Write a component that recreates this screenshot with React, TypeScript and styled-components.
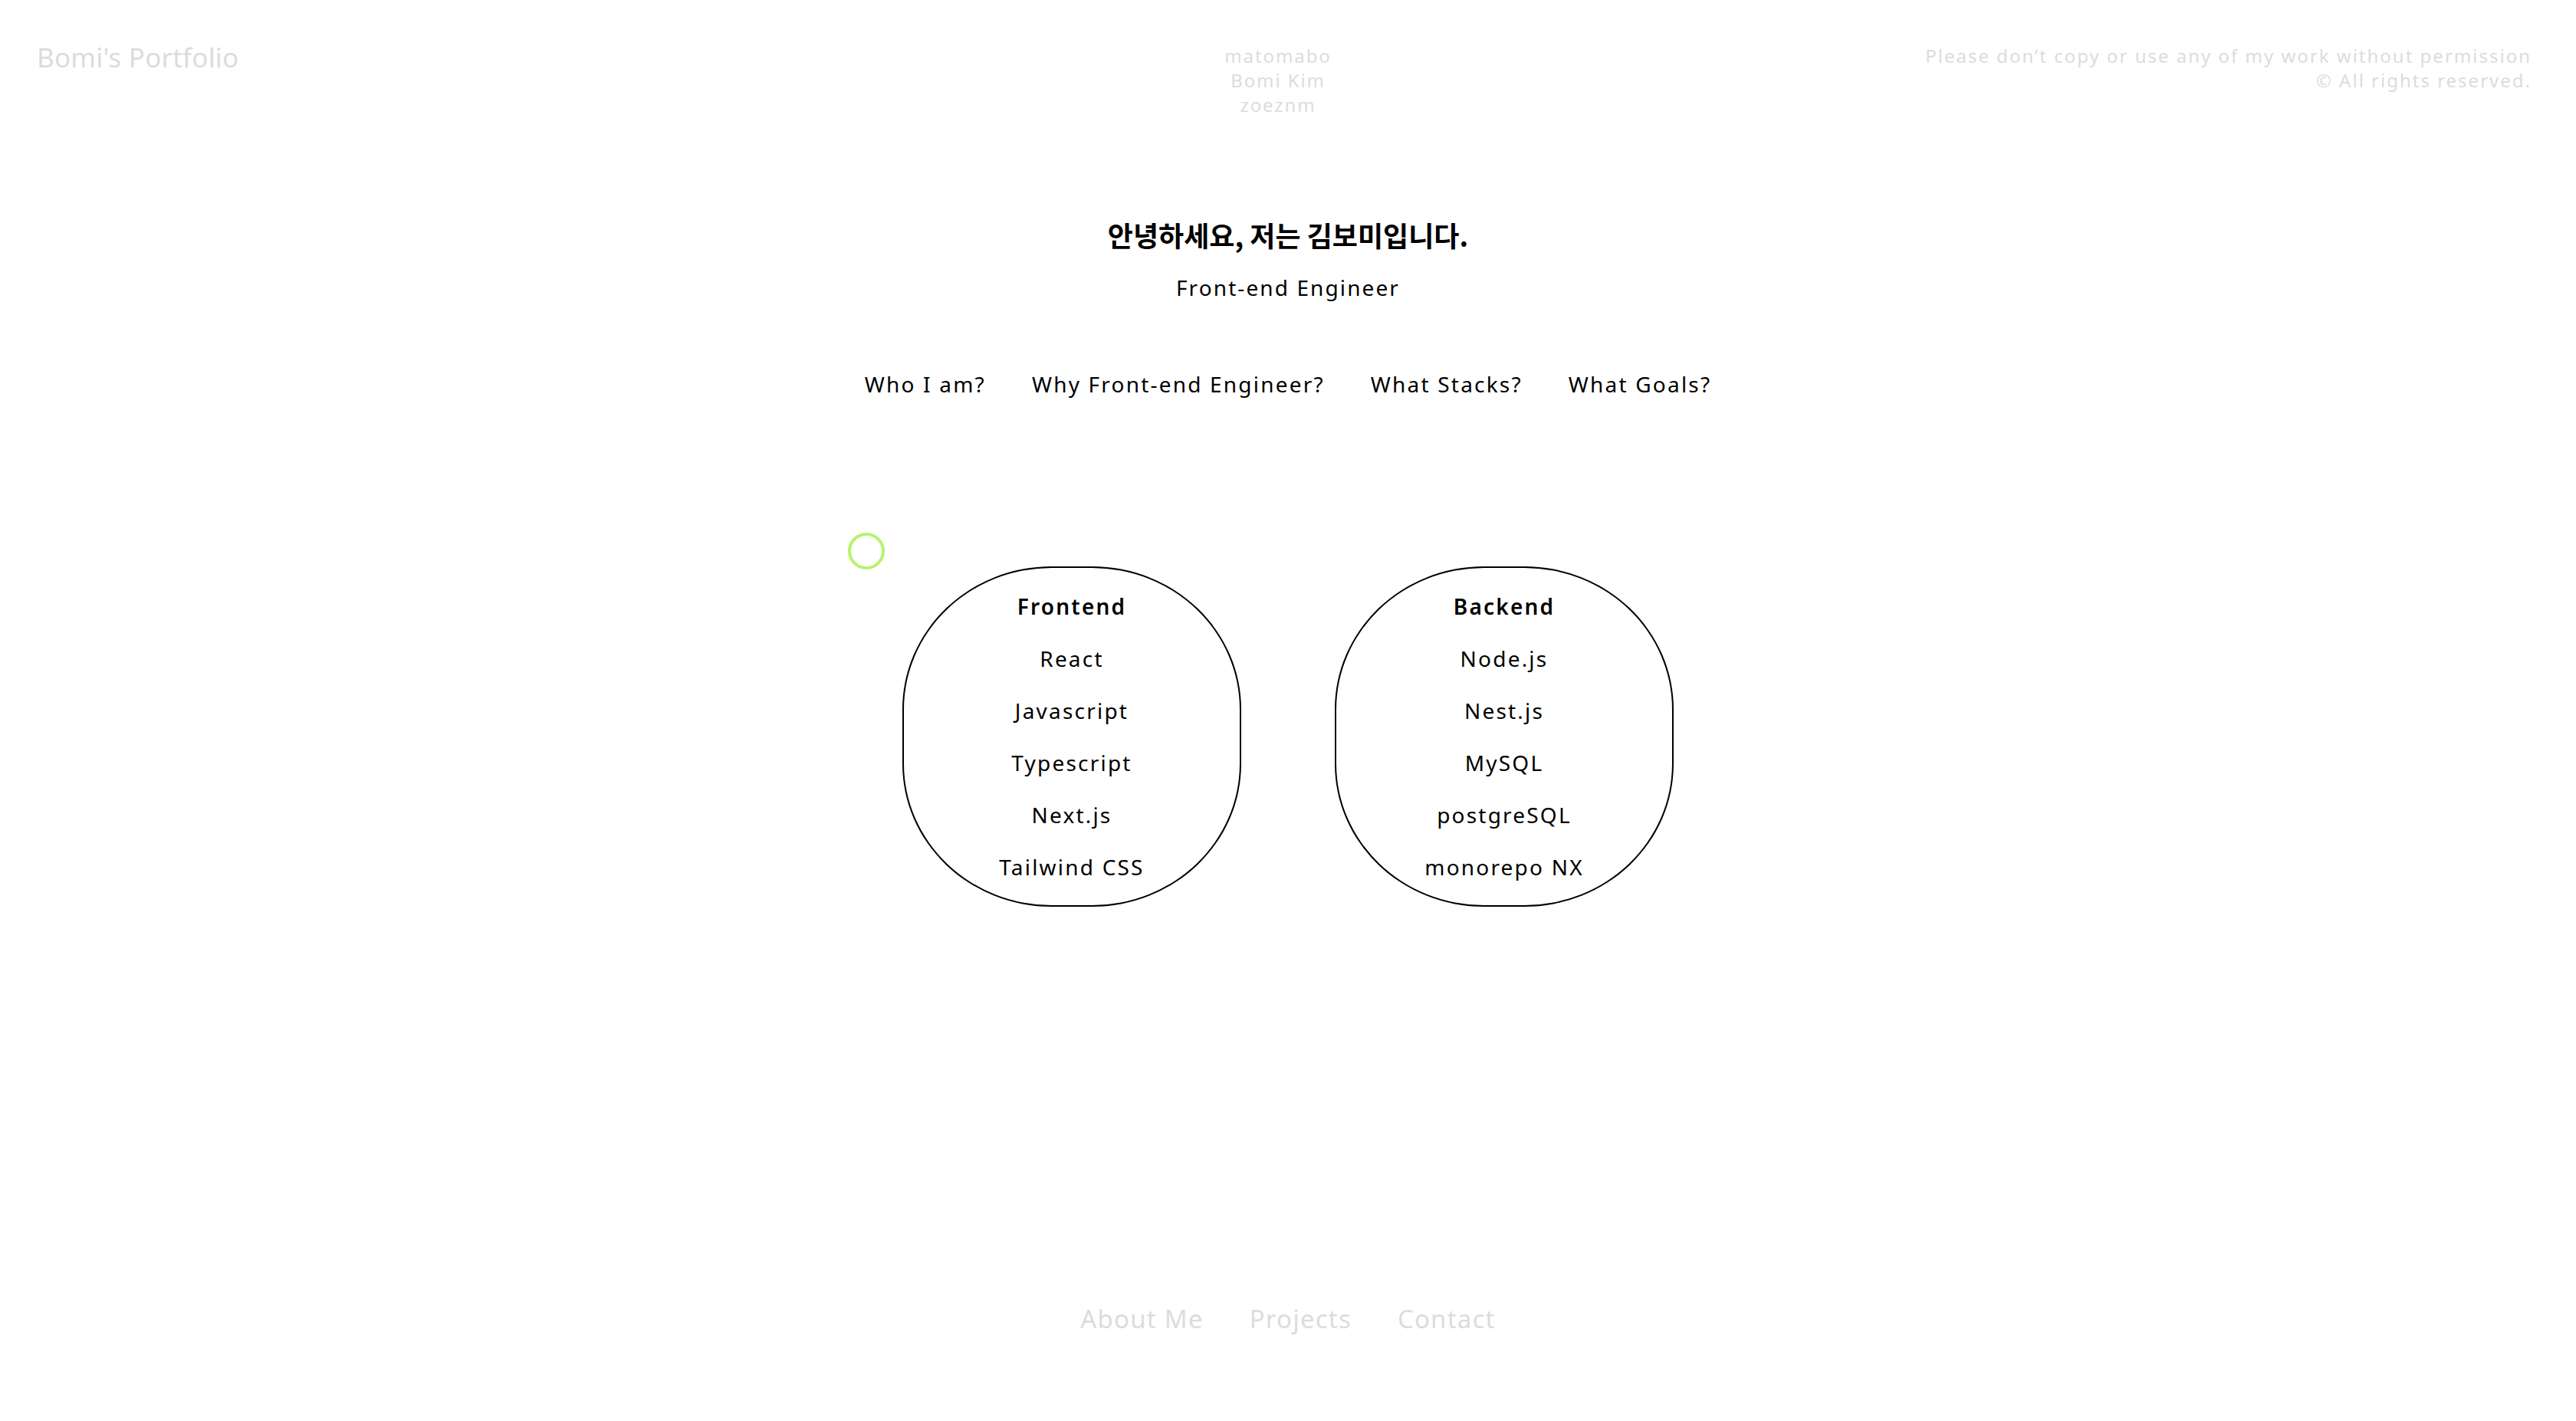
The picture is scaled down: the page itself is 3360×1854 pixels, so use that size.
import React from "react";
import styled, { createGlobalStyle } from "styled-components";

const GlobalStyle = createGlobalStyle`
  html, body {
    margin: 0;
    padding: 0;
    background: #ffffff;
  }
  body {
    font-family: "Noto Sans", "Noto Sans CJK KR", sans-serif;
    color: #000000;
  }
  * { box-sizing: border-box; }
`;

const Page = styled.div`
  position: relative;
  min-height: 100vh;
  display: flex;
  flex-direction: column;
`;

const Header = styled.header`
  display: grid;
  grid-template-columns: 1fr auto 1fr;
  align-items: start;
  padding: 57px 60px 0 48px;
  color: #dcdcdc;
`;

const Brand = styled.div`
  font-size: 35px;
  line-height: 36px;
  font-weight: 400;
  letter-spacing: 0.2px;
`;

const Credits = styled.div`
  display: flex;
  flex-direction: column;
  align-items: center;
  font-size: 24px;
  line-height: 32px;
  letter-spacing: 1.9px;
  margin-right: 14px;
`;

const Notice = styled.div`
  justify-self: end;
  text-align: right;
  font-size: 24px;
  line-height: 32px;
  letter-spacing: 2px;
  margin-right: -2px;
`;

const Intro = styled.section`
  display: flex;
  flex-direction: column;
  align-items: center;
  margin-top: 129px;
`;

const Greeting = styled.h1`
  margin: 0;
  font-family: "Noto Sans CJK KR", "Noto Sans", sans-serif;
  font-size: 36px;
  line-height: 48px;
  font-weight: 700;
  letter-spacing: 0px;
`;

const Role = styled.p`
  margin: 25px 0 0;
  font-size: 28px;
  line-height: 40px;
  letter-spacing: 2.1px;
`;

const Tabs = styled.nav`
  display: flex;
  justify-content: center;
  gap: 60px;
  margin-top: 86px;
`;

const Tab = styled.span`
  font-size: 28px;
  line-height: 40px;
  letter-spacing: 2.2px;
  color: #000;
`;

const Stacks = styled.section`
  display: flex;
  justify-content: center;
  gap: 122px;
  margin-top: 218px;
`;

const Bubble = styled.div`
  width: 442px;
  height: 444px;
  border: 2px solid #000;
  border-radius: 44% / 42%;
  padding: 16px 0;
  display: flex;
  flex-direction: column;
  align-items: center;
`;

const Item = styled.div<{ $title?: boolean }>`
  height: 68px;
  line-height: 68px;
  font-size: 28px;
  letter-spacing: 2.2px;
  font-weight: ${(p) => (p.$title ? 600 : 400)};
`;

const Footer = styled.footer`
  margin-top: auto;
  padding-bottom: 113px;
  display: flex;
  justify-content: center;
  gap: 60px;
  color: #dcdcdc;
`;

const FooterLink = styled.span`
  font-size: 33px;
  line-height: 40px;
  letter-spacing: 1.2px;
`;

const CursorRing = styled.div`
  position: absolute;
  left: 1106px;
  top: 695px;
  width: 48px;
  height: 48px;
  border: 4px solid #b6f46c;
  border-radius: 50%;
  pointer-events: none;
`;

const frontend = ["React", "Javascript", "Typescript", "Next.js", "Tailwind CSS"];
const backend = ["Node.js", "Nest.js", "MySQL", "postgreSQL", "monorepo NX"];

export default function App() {
  return (
    <Page>
      <GlobalStyle />
      <Header>
        <Brand>Bomi's Portfolio</Brand>
        <Credits>
          <span>matomabo</span>
          <span>Bomi Kim</span>
          <span>zoeznm</span>
        </Credits>
        <Notice>
          Please don’t copy or use any of my work without permission
          <br />© All rights reserved.
        </Notice>
      </Header>

      <Intro>
        <Greeting>안녕하세요, 저는 김보미입니다.</Greeting>
        <Role>Front-end Engineer</Role>
        <Tabs>
          <Tab>Who I am?</Tab>
          <Tab>Why Front-end Engineer?</Tab>
          <Tab>What Stacks?</Tab>
          <Tab>What Goals?</Tab>
        </Tabs>
      </Intro>

      <Stacks>
        <Bubble>
          <Item $title>Frontend</Item>
          {frontend.map((s) => (
            <Item key={s}>{s}</Item>
          ))}
        </Bubble>
        <Bubble>
          <Item $title>Backend</Item>
          {backend.map((s) => (
            <Item key={s}>{s}</Item>
          ))}
        </Bubble>
      </Stacks>

      <Footer>
        <FooterLink>About Me</FooterLink>
        <FooterLink>Projects</FooterLink>
        <FooterLink>Contact</FooterLink>
      </Footer>

      <CursorRing />
    </Page>
  );
}
